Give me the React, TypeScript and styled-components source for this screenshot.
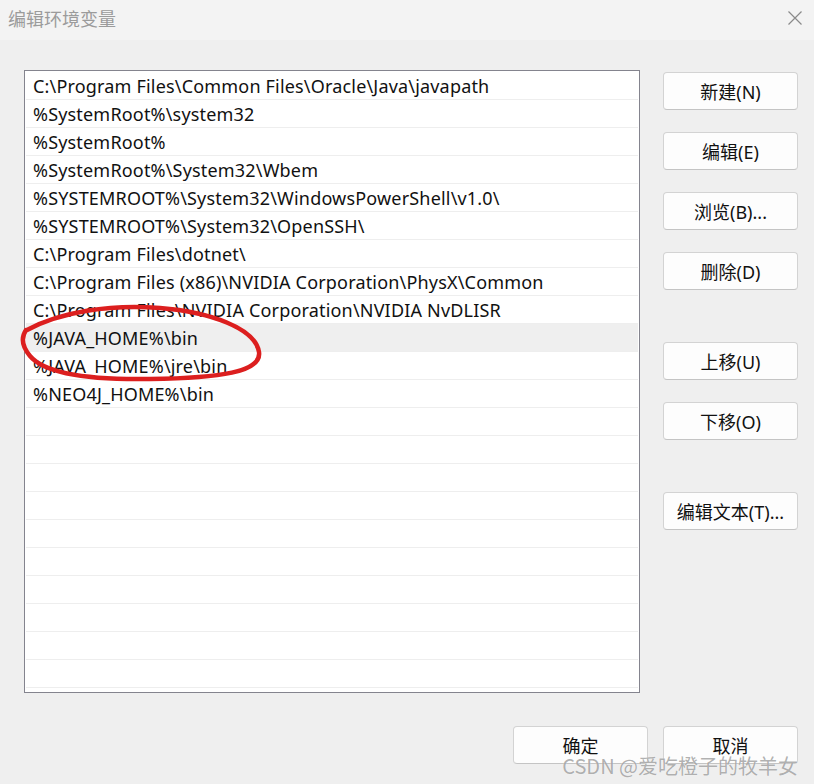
import React from "react";
import styled, { createGlobalStyle } from "styled-components";

const GlobalStyle = createGlobalStyle`
  html, body { margin: 0; padding: 0; background: #efefef; }
  body { font-family: "Noto Sans", "Noto Sans CJK SC", sans-serif; }
  * { box-sizing: border-box; }
`;

const Window = styled.div`
  position: relative;
  width: 814px;
  height: 784px;
  background: #efefef;
  display: flex;
  flex-direction: column;
  overflow: hidden;
`;

const TitleBar = styled.div`
  height: 40px;
  background: #f3f3f3;
  display: flex;
  align-items: center;
  justify-content: space-between;
  padding: 0 11px 4px 8px;
`;

const Title = styled.div`
  font-family: "Noto Sans CJK SC", sans-serif;
  font-size: 18px;
  color: #9b9b9b;
`;

const Body = styled.div`
  display: grid;
  grid-template-columns: 616px 135px;
  column-gap: 23px;
  padding: 30px 16px 0 24px;
`;

const ListBox = styled.div`
  height: 623px;
  background: #ffffff;
  border: 1px solid #84848e;
  padding: 1px;
  overflow: hidden;
`;

const Row = styled.div<{ $selected?: boolean }>`
  height: 28px;
  border-bottom: 1px solid #eeeeee;
  background: ${(p) => (p.$selected ? "#efefef" : "#ffffff")};
  padding-left: 7px;
  display: flex;
  align-items: center;
  font-family: "Noto Sans", "Noto Sans CJK SC", sans-serif;
  font-size: 18px;
  letter-spacing: 0.18px;
  color: #111;
  white-space: nowrap;
`;

const ButtonColumn = styled.div`
  display: flex;
  flex-direction: column;
  padding-top: 2px;
`;

const Button = styled.button<{ $gap?: number }>`
  width: 135px;
  height: 38px;
  margin-top: ${(p) => p.$gap ?? 0}px;
  background: #fdfdfd;
  border: 1px solid #d3d3d3;
  border-bottom-color: #c4c4c4;
  border-radius: 4px;
  font-family: "Noto Sans", "Noto Sans CJK SC", sans-serif;
  font-size: 18px;
  color: #111;
  padding: 0;
  display: flex;
  align-items: center;
  justify-content: center;
`;

const Footer = styled.div`
  grid-column: 1 / span 2;
  display: flex;
  justify-content: flex-end;
  gap: 15px;
  margin-top: 33px;
`;

const Annotation = styled.svg`
  position: absolute;
  left: 0;
  top: 0;
  pointer-events: none;
`;

const Watermark = styled.div`
  position: absolute;
  right: 16px;
  bottom: 7px;
  font-family: "Noto Sans CJK SC", sans-serif;
  font-size: 20px;
  line-height: 22px;
  color: rgba(110, 110, 110, 0.55);
  text-shadow: 0 0 1px rgba(255, 255, 255, 0.8);
  pointer-events: none;
`;

const entries = [
  "C:\\Program Files\\Common Files\\Oracle\\Java\\javapath",
  "%SystemRoot%\\system32",
  "%SystemRoot%",
  "%SystemRoot%\\System32\\Wbem",
  "%SYSTEMROOT%\\System32\\WindowsPowerShell\\v1.0\\",
  "%SYSTEMROOT%\\System32\\OpenSSH\\",
  "C:\\Program Files\\dotnet\\",
  "C:\\Program Files (x86)\\NVIDIA Corporation\\PhysX\\Common",
  "C:\\Program Files\\NVIDIA Corporation\\NVIDIA NvDLISR",
  "%JAVA_HOME%\\bin",
  "%JAVA_HOME%\\jre\\bin",
  "%NEO4J_HOME%\\bin",
];

const rows = Array.from({ length: 22 }, (_, i) => entries[i] ?? "");

const sideButtons: { label: string; gap: number }[] = [
  { label: "新建(N)", gap: 0 },
  { label: "编辑(E)", gap: 22 },
  { label: "浏览(B)...", gap: 22 },
  { label: "删除(D)", gap: 22 },
  { label: "上移(U)", gap: 52 },
  { label: "下移(O)", gap: 22 },
  { label: "编辑文本(T)...", gap: 52 },
];

export default function App() {
  return (
    <>
      <GlobalStyle />
      <Window>
        <TitleBar>
          <Title>编辑环境变量</Title>
          <svg width="16" height="16" viewBox="0 0 16 16">
            <path d="M1.5 1.5 L14.5 14.5 M14.5 1.5 L1.5 14.5" stroke="#8a8a8a" strokeWidth="1.2" fill="none" />
          </svg>
        </TitleBar>
        <Body>
          <ListBox>
            {rows.map((r, i) => (
              <Row key={i} $selected={i === 9}>
                {r}
              </Row>
            ))}
          </ListBox>
          <ButtonColumn>
            {sideButtons.map((b) => (
              <Button key={b.label} $gap={b.gap}>
                {b.label}
              </Button>
            ))}
          </ButtonColumn>
          <Footer>
            <Button>确定</Button>
            <Button>取消</Button>
          </Footer>
        </Body>
        <Annotation width="300" height="400" viewBox="0 0 300 400">
          <path
            d="M27 330 C60 312 110 304 160 308 C210 312 255 328 259 352 C262 372 220 378 150 379 C90 380 45 374 30 356 C20 344 22 336 26 330"
            stroke="#dc1f1f"
            strokeWidth="4.5"
            fill="none"
            strokeLinecap="round"
          />
        </Annotation>
        <Watermark>CSDN @爱吃橙子的牧羊女</Watermark>
      </Window>
    </>
  );
}
